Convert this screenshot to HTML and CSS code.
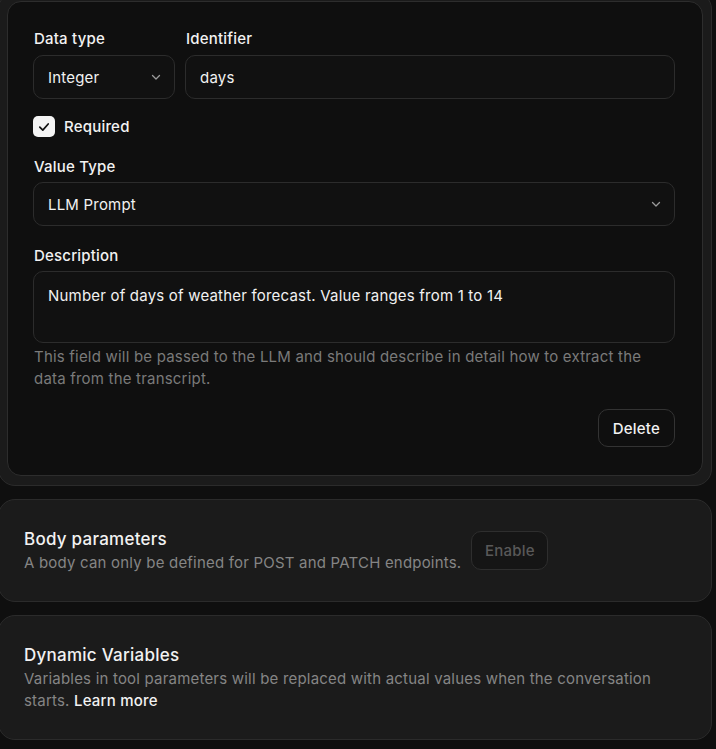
FILE: index.html
```html
<!DOCTYPE html>
<html lang="en">
<head>
<meta charset="utf-8">
<title>Parameter</title>
<link rel="stylesheet" href="styles.css">
</head>
<body>
<div class="page">
  <section class="outer-card">
    <div class="inner-card">
      <div class="row-top">
        <div class="field field-type">
          <label class="label">Data type</label>
          <div class="control select">
            <span>Integer</span>
            <svg class="chev" width="12" height="12" viewBox="0 0 12 12"><path d="M2.5 4.5 L6 8 L9.5 4.5" fill="none" stroke="#9a9a9a" stroke-width="1.3" stroke-linecap="round" stroke-linejoin="round"/></svg>
          </div>
        </div>
        <div class="field field-id">
          <label class="label">Identifier</label>
          <div class="control"><span>days</span></div>
        </div>
      </div>

      <div class="check-row">
        <span class="checkbox">
          <svg width="14" height="14" viewBox="0 0 14 14"><path d="M2.8 7.2 L5.8 10.1 L11.2 4" fill="none" stroke="#111" stroke-width="1.7" stroke-linecap="round" stroke-linejoin="round"/></svg>
        </span>
        <span class="check-label">Required</span>
      </div>

      <div class="field group">
        <label class="label">Value Type</label>
        <div class="control select">
          <span>LLM Prompt</span>
          <svg class="chev" width="12" height="12" viewBox="0 0 12 12"><path d="M2.5 4.5 L6 8 L9.5 4.5" fill="none" stroke="#9a9a9a" stroke-width="1.3" stroke-linecap="round" stroke-linejoin="round"/></svg>
        </div>
      </div>

      <div class="field group">
        <label class="label">Description</label>
        <div class="control textarea">Number of days of weather forecast. Value ranges from 1 to 14</div>
        <p class="help">This field will be passed to the LLM and should describe in detail how to extract the data from the transcript.</p>
      </div>

      <div class="actions">
        <button class="btn">Delete</button>
      </div>
    </div>
  </section>

  <section class="card card-body">
    <div class="card-text">
      <h2 class="card-title">Body parameters</h2>
      <p class="card-sub">A body can only be defined for POST and PATCH endpoints.</p>
    </div>
    <button class="btn btn-disabled">Enable</button>
  </section>

  <section class="card">
    <div class="card-text">
      <h2 class="card-title">Dynamic Variables</h2>
      <p class="card-sub">Variables in tool parameters will be replaced with actual values when the conversation starts. <a class="link" href="#">Learn more</a></p>
    </div>
  </section>
</div>
</body>
</html>
```

FILE: styles.css
```css
* { box-sizing: border-box; }
html, body {
  margin: 0;
  padding: 0;
  background: #0f0f0f;
}
body {
  font-family: Inter, "Noto Sans", "Liberation Sans", sans-serif;
  color: #f2f2f2;
  letter-spacing: 0.2px;
  overflow: hidden;
}
.page {
  margin: -8px 4px 0 -2px;
  display: flex;
  flex-direction: column;
  gap: 13px;
}
.outer-card {
  background: #1b1b1b;
  border: 1px solid #2b2b2b;
  border-radius: 17px;
  padding: 8px 8px 9px 8px;
}
.inner-card {
  background: #0f0f0f;
  border: 1px solid #2d2d2d;
  border-radius: 14px;
  padding: 27px 27px 28px 25px;
  display: flex;
  flex-direction: column;
}
.row-top {
  display: flex;
  gap: 10px;
}
.field {
  display: flex;
  flex-direction: column;
}
.field-type { width: 142px; flex: none; }
.field-id { flex: 1; }
.label {
  font-size: 15px;
  line-height: 20px;
  font-weight: 500;
  color: #f2f2f2;
  margin-bottom: 6px;
  padding-left: 1px;
}
.control {
  height: 44px;
  border: 1px solid #2c2c2c;
  border-radius: 10px;
  background: #111111;
  display: flex;
  align-items: center;
  padding: 0 12px 0 14px;
  font-size: 15px;
  color: #f2f2f2;
}
.select { justify-content: space-between; }
.chev { flex: none; }
.check-row {
  margin-top: 17px;
  display: flex;
  align-items: center;
  gap: 9px;
  height: 21px;
}
.checkbox {
  width: 22px;
  height: 21px;
  border-radius: 5px;
  background: #f4f4f4;
  display: flex;
  align-items: center;
  justify-content: center;
}
.check-label {
  font-size: 15px;
  font-weight: 500;
  line-height: 20px;
}
.group { margin-top: 19px; }
.group .label { margin-top: 1px; margin-bottom: 5px; }
.textarea {
  height: 72px;
  align-items: flex-start;
  padding-top: 13px;
  line-height: 22px;
}
.help {
  margin: 3px 0 0 0;
  font-size: 15px;
  line-height: 22px;
  color: #7a7a7a;
  padding-left: 1px;
}
.actions {
  margin-top: 19px;
  display: flex;
  justify-content: flex-end;
}
.btn {
  font-family: inherit;
  letter-spacing: 0.2px;
  height: 38px;
  padding: 0 14px;
  border: 1px solid #333333;
  border-radius: 10px;
  background: #0f0f0f;
  color: #f2f2f2;
  font-size: 15px;
  font-weight: 500;
}
.card {
  background: #1b1b1b;
  border: 1px solid #2b2b2b;
  border-radius: 17px;
  padding: 27px 25px 27px 25px;
  display: flex;
  align-items: center;
  gap: 10px;
}
.card-title {
  margin: 0;
  font-size: 17px;
  line-height: 24px;
  font-weight: 500;
  color: #f2f2f2;
  letter-spacing: 0.25px;
}
.card-sub {
  margin: 1px 0 0 0;
  font-size: 15px;
  line-height: 22px;
  color: #858585;
}
.link {
  color: #f2f2f2;
  text-decoration: none;
  font-weight: 500;
}
.btn-disabled {
  height: 39px;
  width: 77px;
  padding: 0;
  background: #151515;
  border-color: #2e2e2e;
  color: #595959;
  font-weight: 500;
}
```
